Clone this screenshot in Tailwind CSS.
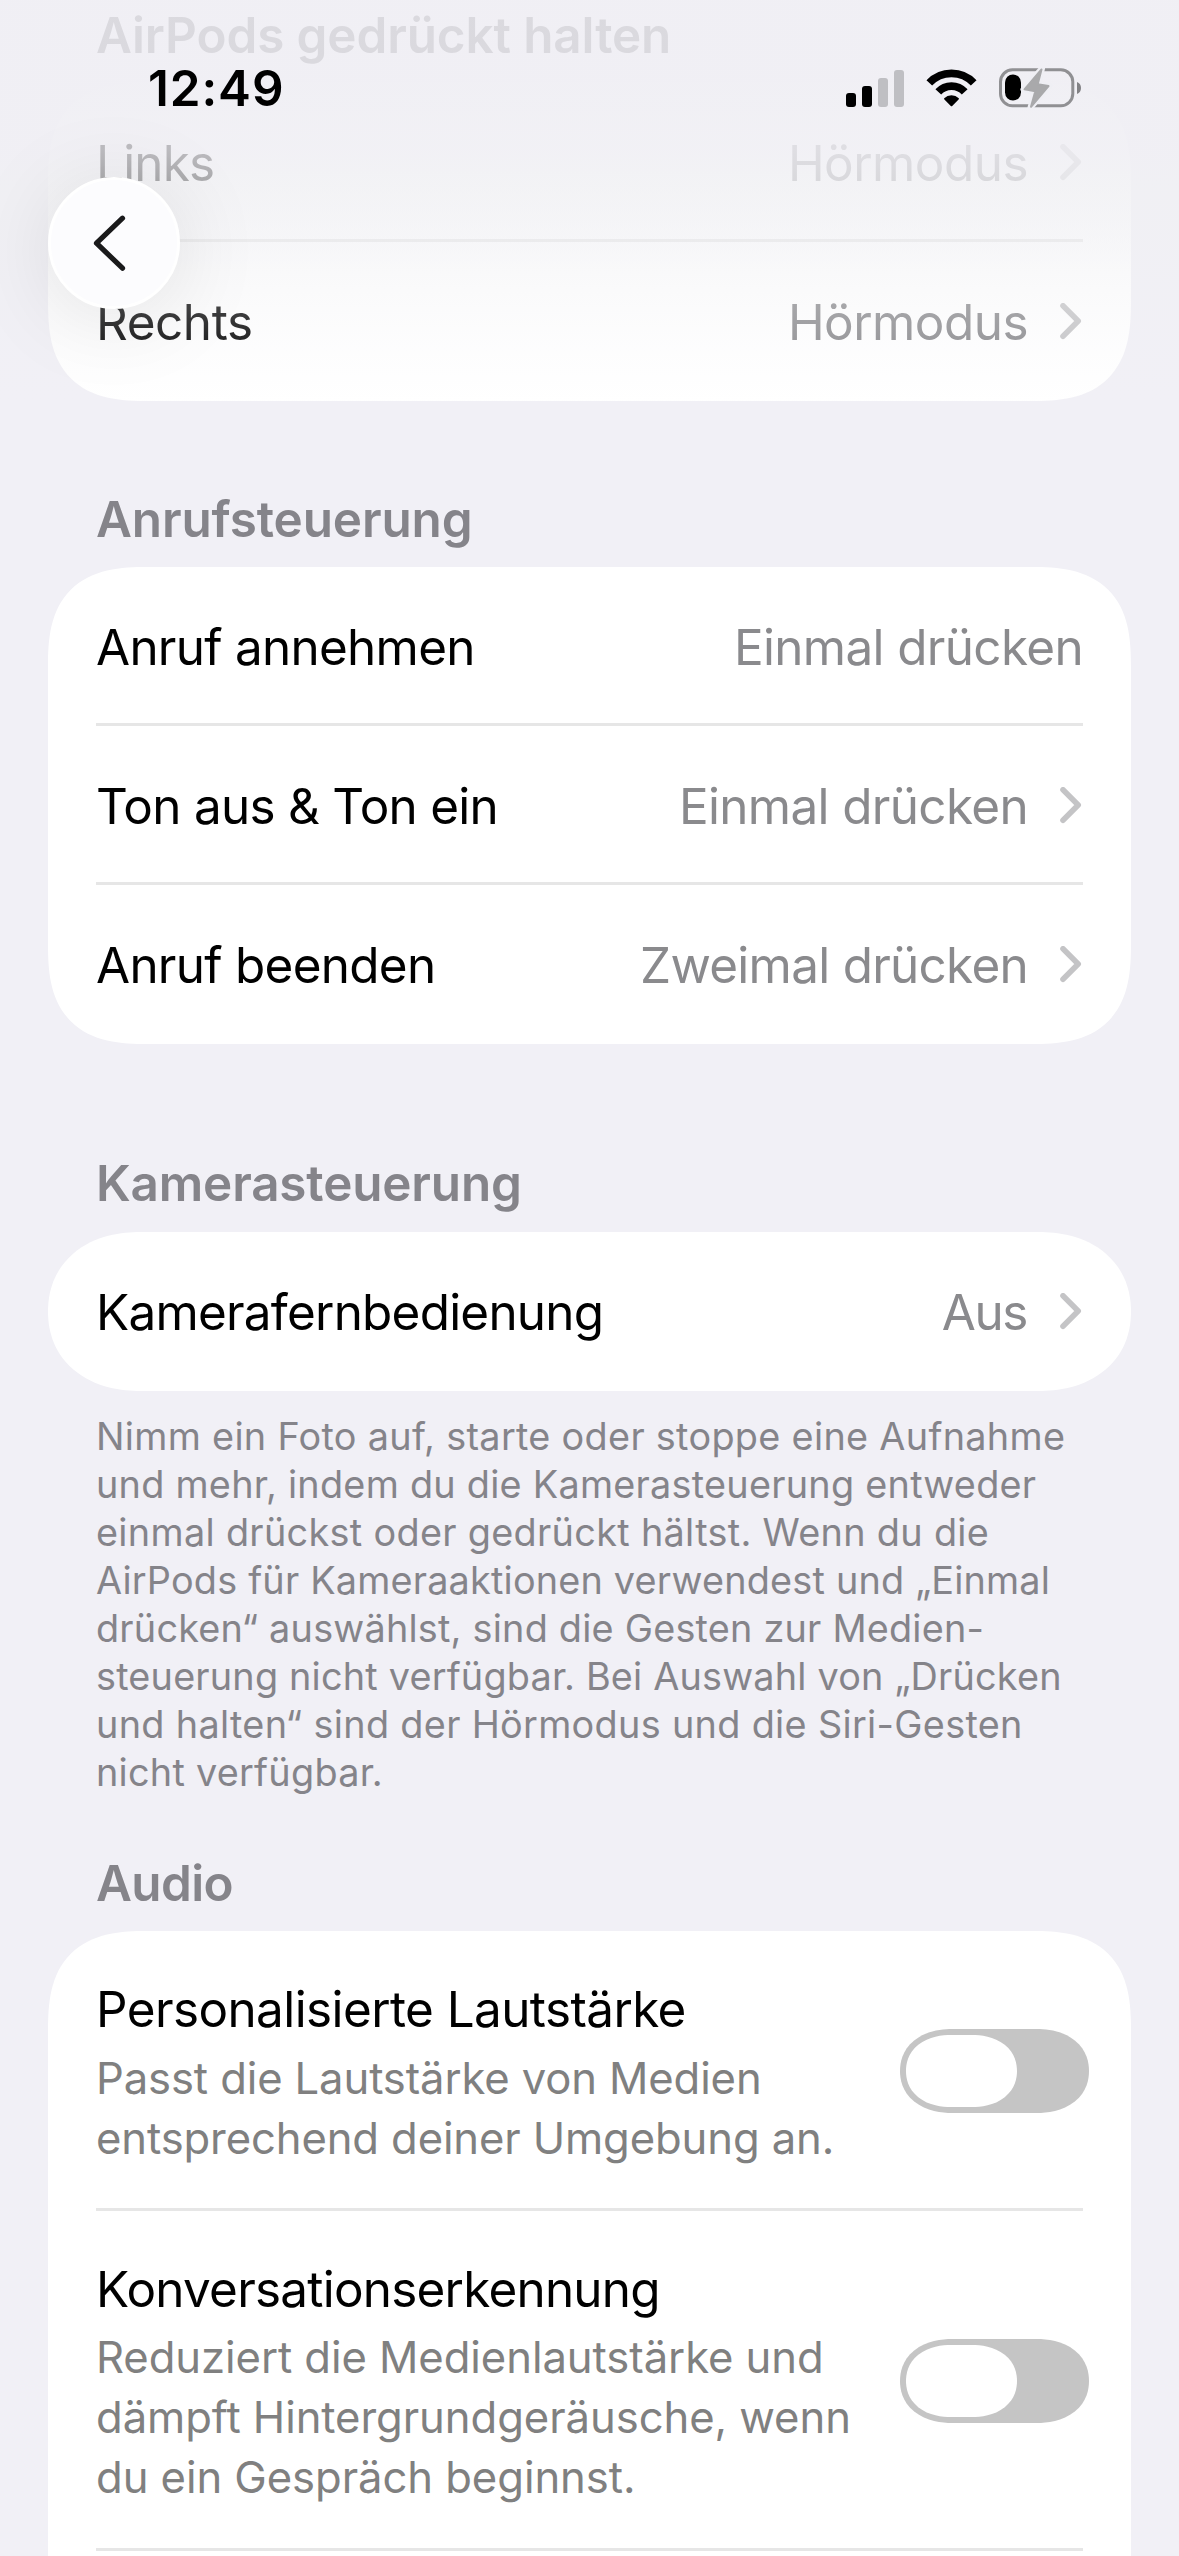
<!DOCTYPE html>
<html lang="de">
<head>
<meta charset="utf-8">
<title>AirPods</title>
<script src="https://cdn.jsdelivr.net/npm/@tailwindcss/browser@4"></script>
</head>
<body class="relative h-[2556px] w-[1179px] overflow-hidden bg-[#f1f0f6] font-['Inter',sans-serif] text-[49.4px] leading-[60px] tracking-[-0.7px] text-black">
<svg class="hidden">
  <symbol id="chevron" viewBox="0 0 25 38"><path d="M5 2.8 20.2 18 5 33.2" fill="none" stroke="currentColor" stroke-width="5.6" stroke-linecap="round" stroke-linejoin="round"/></symbol>
</svg>

<main class="flex flex-col px-12 pt-[5px]">
  <h2 class="mb-[18px] px-12 font-semibold tracking-[-0.1px] text-[#85848a]">AirPods gedrückt halten</h2>
  <section class="rounded-[100px] bg-linear-to-b from-[#f2f2f6] to-white to-60% px-12 [corner-shape:superellipse(1.42)]">
    <div class="flex h-[159px] items-center border-b-3 border-[#e6e6e6] pt-1">
      <span class="flex-1 tracking-[-0.79px]">Links</span>
      <span class="tracking-[-0.5px] text-[#9e9ea2]">Hörmodus</span>
      <svg class="ml-[30px] h-[38px] w-[25px] text-[#cdcdd0]"><use href="#chevron"/></svg>
    </div>
    <div class="flex h-[159px] items-center border-b-3 border-transparent pt-1">
      <span class="flex-1 tracking-[-0.4px]">Rechts</span>
      <span class="tracking-[-0.5px] text-[#8a8a8d]">Hörmodus</span>
      <svg class="ml-[30px] h-[38px] w-[25px] text-[#c4c4c6]"><use href="#chevron"/></svg>
    </div>
  </section>

  <h2 class="mt-[88px] mb-[18px] px-12 font-semibold tracking-[-0.1px] text-[#85848a]">Anrufsteuerung</h2>
  <section class="rounded-[100px] bg-white px-12 [corner-shape:superellipse(1.42)]">
    <div class="flex h-[159px] items-center border-b-3 border-[#e6e6e6] pt-1">
      <span class="flex-1">Anruf annehmen</span>
      <span class="tracking-[-0.63px] text-[#8a8a8d]">Einmal drücken</span>
    </div>
    <div class="flex h-[159px] items-center border-b-3 border-[#e6e6e6] pt-1">
      <span class="flex-1">Ton aus &amp; Ton ein</span>
      <span class="tracking-[-0.63px] text-[#8a8a8d]">Einmal drücken</span>
      <svg class="ml-[30px] h-[38px] w-[25px] text-[#c4c4c6]"><use href="#chevron"/></svg>
    </div>
    <div class="flex h-[159px] items-center border-b-3 border-transparent pt-1">
      <span class="flex-1">Anruf beenden</span>
      <span class="text-[#8a8a8d]">Zweimal drücken</span>
      <svg class="ml-[30px] h-[38px] w-[25px] text-[#c4c4c6]"><use href="#chevron"/></svg>
    </div>
  </section>

  <h2 class="mt-[109px] mb-[19px] px-12 font-semibold tracking-[-0.15px] text-[#85848a]">Kamerasteuerung</h2>
  <section class="rounded-[92px/79.5px] bg-white px-12 [corner-shape:superellipse(1.12)]">
    <div class="flex h-[159px] items-center border-b-3 border-transparent pt-1">
      <span class="flex-1 tracking-[-0.74px]">Kamerafernbedienung</span>
      <span class="tracking-[-1.4px] text-[#8a8a8d]">Aus</span>
      <svg class="ml-[31px] h-[38px] w-[25px] text-[#c4c4c6]"><use href="#chevron"/></svg>
    </div>
  </section>
  <p class="mt-[21px] pl-12 text-[37.8px] leading-[48px] tracking-[0.26px] whitespace-nowrap text-[#85848a]"><span class="tracking-[0.31px]">Nimm ein Foto auf, starte oder stoppe eine Aufnahme</span><br>und mehr, indem du die Kamerasteuerung entweder<br><span class="tracking-[0.32px]">einmal drückst oder gedrückt hältst. Wenn du die</span><br><span class="tracking-[0.2px]">AirPods für Kameraaktionen verwendest und „Einmal</span><br><span class="tracking-[0.22px]">drücken“ auswählst, sind die Gesten zur Medien-</span><br><span class="tracking-[0.2px]">steuerung nicht verfügbar. Bei Auswahl von „Drücken</span><br><span class="tracking-[0.32px]">und halten“ sind der Hörmodus und die Siri-Gesten</span><br>nicht verfügbar.</p>

  <h2 class="mt-[57px] mb-[18px] px-12 font-semibold tracking-[-0.6px] text-[#85848a]">Audio</h2>
  <section class="h-[625px] shrink-0 rounded-t-[100px] bg-white px-12 [corner-shape:superellipse(1.42)]">
    <div class="flex h-[280px] items-start justify-between border-b-3 border-[#e6e6e6] pt-12 whitespace-nowrap">
      <div>
        <h3 class="tracking-[-0.57px]">Personalisierte Lautstärke</h3>
        <p class="mt-[10px] text-[43.6px] tracking-[-0.12px] text-[#808080]">Passt die Lautstärke von Medien<br>entsprechend deiner Umgebung an.</p>
      </div>
      <div class="mt-[50px] -mr-1.5 flex h-[84px] w-[189px] items-center rounded-[52px/42px] bg-[#c5c5c5] px-1.5 [corner-shape:superellipse(1.12)]">
        <div class="h-[72px] w-[111px] rounded-[45px/36px] bg-white [corner-shape:superellipse(1.12)]"></div>
      </div>
    </div>
    <div class="flex h-[340px] items-start justify-between border-b-3 border-[#e6e6e6] pt-12 whitespace-nowrap">
      <div>
        <h3 class="tracking-[-0.75px]">Konversationserkennung</h3>
        <p class="mt-[9px] text-[43.6px] tracking-[-0.06px] text-[#808080]">Reduziert die Medienlautstärke und<br>dämpft Hintergrundgeräusche, wenn<br>du ein Gespräch beginnst.</p>
      </div>
      <div class="mt-[80px] -mr-1.5 flex h-[84px] w-[189px] items-center rounded-[52px/42px] bg-[#c5c5c5] px-1.5 [corner-shape:superellipse(1.12)]">
        <div class="h-[72px] w-[111px] rounded-[45px/36px] bg-white [corner-shape:superellipse(1.12)]"></div>
      </div>
    </div>
  </section>
</main>

<!-- Translucent header above the scrolled list -->
<header class="absolute inset-x-0 top-0 h-[410px] bg-[linear-gradient(to_bottom,rgb(240_239_244/0.8)_0px,rgb(240_239_244/0.79)_150px,rgb(240_240_243/0.7)_185px,rgb(240_240_243/0.52)_240px,rgb(240_240_243/0.28)_305px,rgb(240_240_243/0.16)_340px,rgb(240_240_243/0)_405px)]">
  <div class="flex h-[118px] items-center pt-[58px] pr-[98px] pl-[148px]">
    <time class="flex-1 font-semibold tracking-[0.9px]">12:49</time>
    <svg class="h-[37px] w-[58px]" viewBox="0 0 58 37">
      <rect x="0" y="23" width="10" height="14" rx="3"/>
      <rect x="16" y="16" width="10" height="21" rx="3"/>
      <rect x="32" y="8" width="10" height="29" rx="3" fill="#bfbfc3"/>
      <rect x="48" y="0" width="10" height="37" rx="3" fill="#bfbfc3"/>
    </svg>
    <svg class="ml-[22px] h-[38px] w-[51px]" viewBox="0 0 51 38">
      <path d="M3.3 13.9A30.6 30.6 0 0 1 47.7 13.9M12.3 22.9A17.9 17.9 0 0 1 38.7 22.9" fill="none" stroke="#000" stroke-width="7.8"/>
      <path d="M18.2 29.2A10.6 10.6 0 0 1 32.8 29.2Q33.2 29.8 32.6 30.4L26.2 37Q25.5 37.7 24.8 37L18.4 30.4Q17.8 29.8 18.2 29.2Z"/>
    </svg>
    <svg class="ml-[22px] h-[40px] w-[82px]" viewBox="0 0 82 40">
      <rect x="1.5" y="1.8" width="72.3" height="36" rx="12" fill="none" stroke="#909093" stroke-width="3"/>
      <rect x="6" y="6.5" width="16" height="26" rx="8"/>
      <path d="M43 .5 24.5 21.5 36 23.8 31.5 39.5 50.5 17.6 39.2 15.6Z" fill="#efeff4" stroke="#efeff4" stroke-width="6" stroke-linejoin="round"/>
      <path d="M42.5 1.5 25.5 21.3 36.3 23.2 32 38.8 49.5 18 38.7 16.2Z" fill="#a9a9ab" stroke="#a9a9ab" stroke-width="2" stroke-linejoin="round"/>
      <path d="M78 14Q82 15.5 82 20T78 26Z" fill="#828285"/>
    </svg>
  </div>
  <button class="mt-[59px] ml-12 flex size-[132px] items-center justify-center rounded-full border-3 border-white bg-[#fcfcfe] shadow-[0_8px_90px_rgb(0_0_0/0.1)]">
    <svg class="mr-[9px] h-[56px] w-[33px]" viewBox="0 0 33 56"><path d="M29.5 3.2 3.5 28.2 29.5 53.2" fill="none" stroke="#1a1a1b" stroke-width="5.2" stroke-linecap="round" stroke-linejoin="round"/></svg>
  </button>
</header>
</body>
</html>
